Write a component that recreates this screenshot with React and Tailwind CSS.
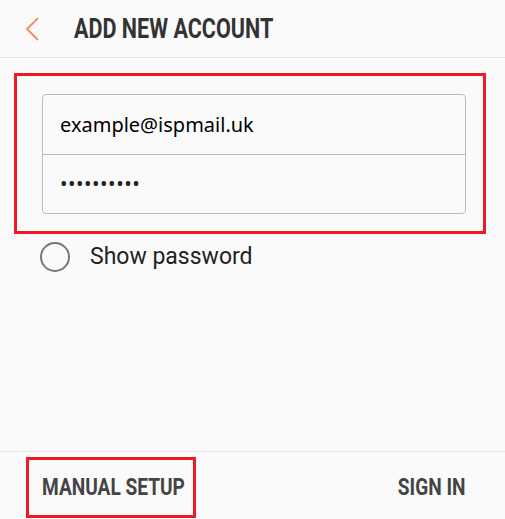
export default function App() {
  return (
    <div className="w-[505px] h-[519px] bg-[#fafafa] flex flex-col overflow-hidden" style={{ fontFamily: "Roboto, 'Liberation Sans', sans-serif" }}>
      <div className="h-[58px] flex items-center border-b border-[#e6e6e6] shrink-0">
        <svg width="14" height="24" viewBox="0 0 14 24" className="ml-[25px] mr-[35px]">
          <path d="M13 1 L2 12 L13 23" fill="none" stroke="#f58a5c" strokeWidth="1.8" />
        </svg>
        <span className="inline-block text-[28px] font-bold text-[#333] scale-x-[0.77] origin-left whitespace-nowrap leading-none">ADD NEW ACCOUNT</span>
      </div>
      <div className="mt-[15px] ml-[14px] mr-[19px] border-[3px] border-[#ed1c24] pl-[25px] pr-[17px] pt-[18px] pb-[17px]">
        <div className="border border-[#bbbbbb] rounded-[4px]">
          <div className="h-[60px] flex items-center px-[17px] border-b border-[#bbbbbb] text-[20px] text-black" style={{ fontFamily: "'Noto Sans', sans-serif" }}>
            example@ispmail.uk
          </div>
          <div className="h-[58px] flex items-center px-[17px] text-[20px] text-[#222] tracking-[0.5px]" style={{ fontFamily: "'Noto Sans', sans-serif" }}>
            ••••••••••
          </div>
        </div>
      </div>
      <div className="flex items-center mt-[6px] ml-[40px]">
        <div className="w-[30px] h-[30px] rounded-full border-2 border-[#777]"></div>
        <span className="ml-[20px] text-[23px] text-[#222]">Show password</span>
      </div>
      <div className="flex-1"></div>
      <div className="h-[68px] border-t border-[#e4e4e4] flex items-start justify-between shrink-0">
        <div className="mt-[5px] ml-[26px] w-[170px] h-[61px] border-[3px] border-[#ed1c24] flex items-center pl-[13px]">
          <span className="inline-block text-[23px] font-bold text-[#444] scale-x-[0.83] origin-left whitespace-nowrap leading-none">MANUAL SETUP</span>
        </div>
        <div className="mt-[5px] h-[61px] flex items-center mr-[40px]">
          <span className="inline-block text-[23px] font-bold text-[#444] scale-x-[0.83] origin-right whitespace-nowrap leading-none">SIGN IN</span>
        </div>
      </div>
    </div>
  );
}
